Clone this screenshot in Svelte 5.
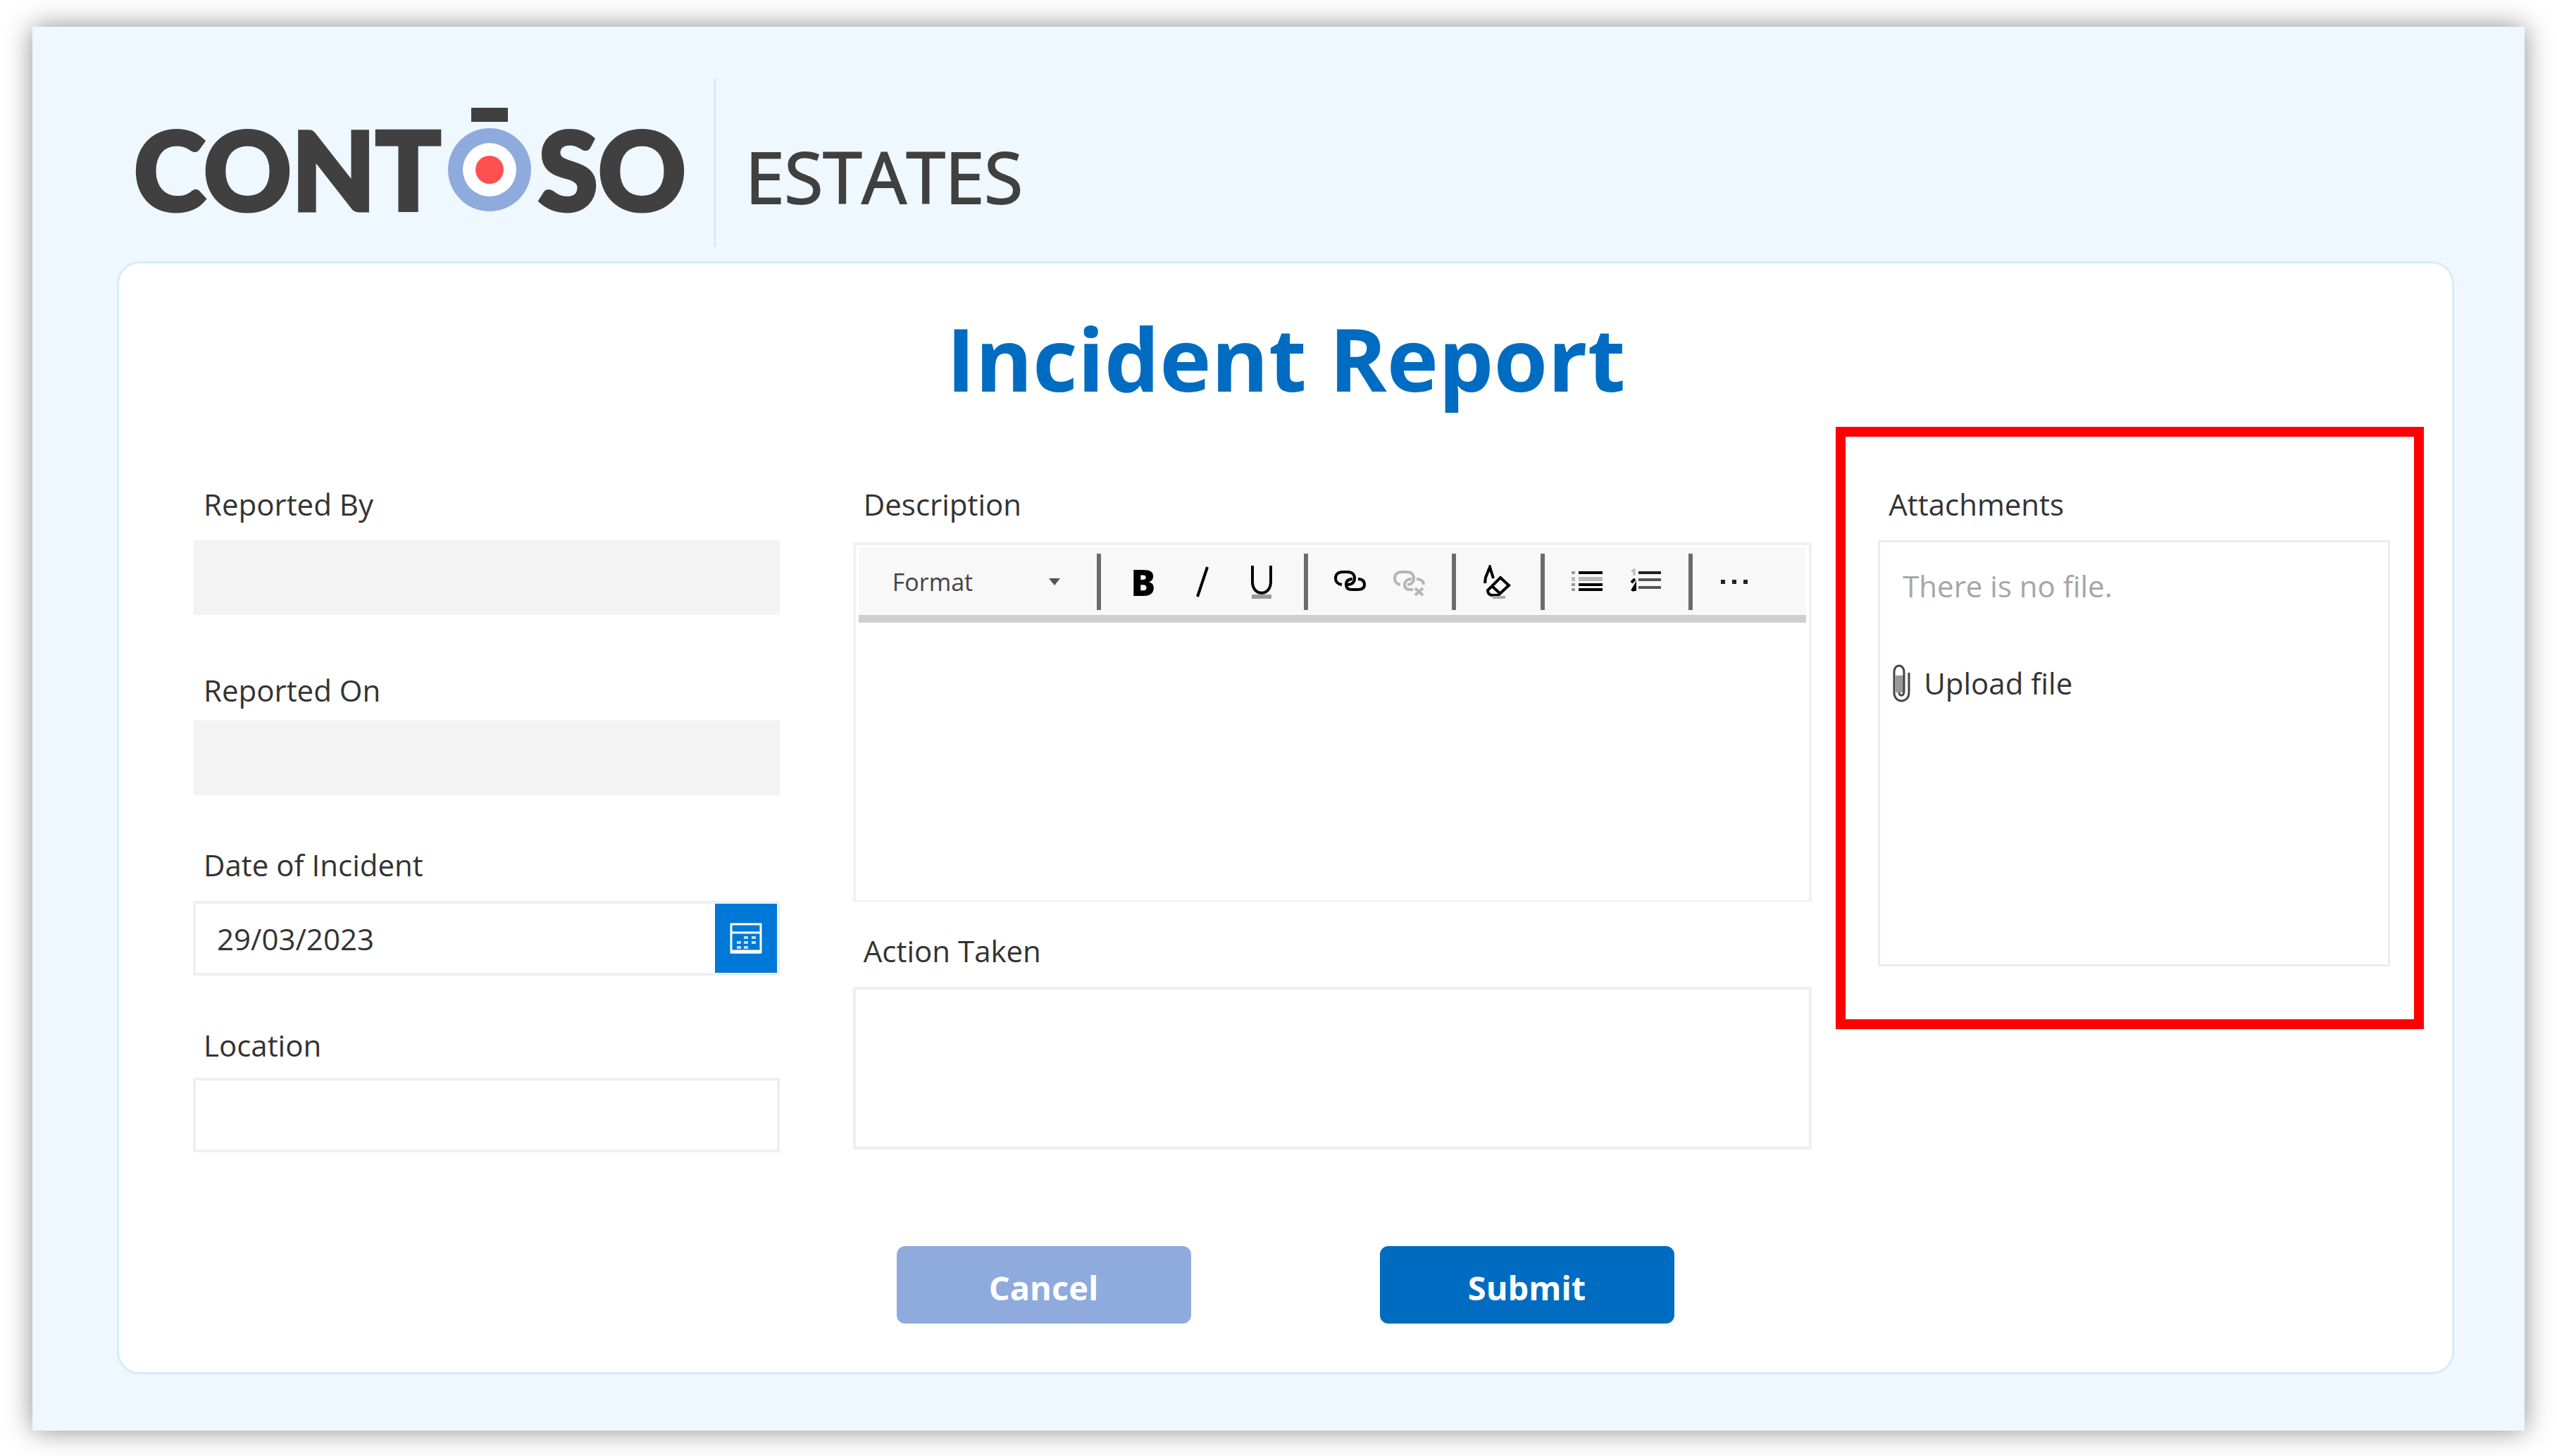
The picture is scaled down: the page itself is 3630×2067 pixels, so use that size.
<script lang="ts">
  let date = $state('29/03/2023');
</script>

<main class="screen">
  <header class="brand">
    <div class="logo">
      <span>CONT</span>
      <svg class="target" viewBox="0 0 118 148" aria-hidden="true">
        <rect x="33" y="0" width="52" height="20" fill="#404040" />
        <circle cx="59" cy="88" r="59" fill="#8faadc" />
        <circle cx="59" cy="88" r="38" fill="#fff" />
        <circle cx="59" cy="88" r="20" fill="#ff5050" />
      </svg>
      <span>SO</span>
    </div>
    <div class="unit">ESTATES</div>
  </header>

  <form class="card" onsubmit={(e) => e.preventDefault()}>
    <h1>Incident Report</h1>

    <div class="columns">
      <div class="column details">
        <div class="field">
          <label for="by">Reported By</label>
          <input id="by" class="box readonly" readonly />
        </div>
        <div class="field">
          <label for="on" class="low">Reported On</label>
          <input id="on" class="box readonly" readonly />
        </div>
        <div class="field">
          <label for="date">Date of Incident</label>
          <div class="box date">
            <input id="date" bind:value={date} />
            <button type="button" aria-label="Open calendar">
              <svg viewBox="0 0 46 44" fill="none" stroke="#fff" stroke-width="3">
                <path d="M2 2H44V42H2ZM2 14H44" />
                <path d="M2 41H44" stroke-width="5" />
                <path d="M20 21h6M31 21h6M10 28h6M20 28h6M31 28h6M10 35h6M20 35h6" stroke="#b9dcf7" stroke-width="4" />
              </svg>
            </button>
          </div>
        </div>
        <div class="field">
          <label for="location" class="near">Location</label>
          <input id="location" class="box" />
        </div>
      </div>

      <div class="column notes">
        <div class="field">
          <label for="description">Description</label>
          <div class="editor">
            <div class="toolbar">
              <button type="button" class="format">
                Format
                <svg viewBox="0 0 16 10"><path d="M0 0H16L8 10Z" fill="#555" /></svg>
              </button>
              <div class="group">
                <button type="button" class="bold" aria-label="Bold">B</button>
                <button type="button" aria-label="Italic">
                  <svg viewBox="0 0 48 48"><path d="M31 3L17 45" /></svg>
                </button>
                <button type="button" aria-label="Underline">
                  <svg viewBox="0 0 48 48"><path d="M11 1V24C11 45 37 45 37 24V1" /><path d="M10 45H38" stroke="#999" stroke-width="6" /></svg>
                </button>
              </div>
              <div class="group">
                <button type="button" aria-label="Link">
                  <svg viewBox="0 0 48 48"><path d="M12 28C5 27 3 23 3 19C3 13 7 10 13 10H20C26 10 30 13 30 19C30 25 26 28 20 28" /><path d="M27 20C20 20 18 24 18 28C18 33 21 35 26 35H34C40 35 44 33 44 28C44 23 41 20 35 20" /></svg>
                </button>
                <button type="button" class="off" aria-label="Remove link">
                  <svg viewBox="0 0 48 48"><path d="M11 28C5 27 3 23 3 19C3 13 7 10 13 10H20C26 10 30 13 30 19C30 25 26 28 21 28" /><path d="M27 20C20 20 17 24 17 28C17 33 20 35 25 35H29M34 20C40 20 44 23 44 28M32 33L43 43M43 33L32 43" /></svg>
                </button>
              </div>
              <div class="group">
                <button type="button" aria-label="Clear formatting">
                  <svg viewBox="0 0 48 48"><path d="M5 26L6 18L12 3L17 19M27 18L39 29L24 43H15Q9 42 9 36ZM15 30L27 41" /><path d="M16 46H34" stroke="#aaa" /></svg>
                </button>
              </div>
              <div class="group">
                <button type="button" aria-label="Bulleted list">
                  <svg viewBox="0 0 48 48"><path d="M12 11H46M12 28H46M12 35H46" /><path d="M12 20H46M2 20H7" stroke="#bbb" stroke-width="6" /><path d="M2 11H7M2 28H7M2 35H7" stroke="#999" /></svg>
                </button>
                <button type="button" aria-label="Numbered list">
                  <svg viewBox="0 0 48 48"><path d="M13 11H45" stroke="#222" /><path d="M13 21H45M13 32H45" stroke="#555" /><path d="M3 9L7 7V15" stroke="#bbb" stroke-width="3" /><path d="M3 25L8 20M4 37L8 30V37" /></svg>
                </button>
              </div>
              <div class="group">
                <button type="button" aria-label="More">
                  <svg viewBox="0 0 48 48"><path d="M4 24h6M20 24h6M36 24h6" stroke="#222" stroke-width="6" /></svg>
                </button>
              </div>
            </div>
            <textarea id="description"></textarea>
          </div>
        </div>
        <div class="field">
          <label for="action">Action Taken</label>
          <textarea id="action" class="box action"></textarea>
        </div>
      </div>

      <section class="attachments">
        <h2>Attachments</h2>
        <div class="files">
          <p>There is no file.</p>
          <button type="button">
            <svg viewBox="0 0 26 54" fill="none" stroke="#444" stroke-width="3"><path d="M4 16H16V40H4Z" fill="#999" stroke="none" /><path d="M23 12V40C23 56 2 56 2 40V11C2 -1 16 -1 16 11V38C16 46 9 46 9 40" /></svg>
            Upload file
          </button>
        </div>
      </section>
    </div>

    <div class="actions">
      <button type="button" class="cancel">Cancel</button>
      <button type="submit">Submit</button>
    </div>
  </form>
</main>

<style>
  :global(body) {
    background: #fff;
  }

  .screen,
  .screen * {
    box-sizing: border-box;
    font-family: 'Open Sans', 'Noto Sans', sans-serif;
  }

  .screen {
    margin: 38px 46px;
    padding: 73px 100px 80px 120px;
    background: #eff7ff;
    box-shadow: 0 0 36px rgb(0 0 0 / 45%);
    color: #333;
  }

  .brand {
    display: flex;
    height: 240px;
    margin-bottom: 20px;
    color: #404040;
  }

  .logo {
    display: flex;
    align-items: flex-end;
    gap: 10px;
    width: 850px;
    padding: 0 0 50px 24px;
    border-right: 2px solid #d3e3f5;
  }

  .logo span {
    padding-bottom: 6px;
    font: 900 154px/110px Lato, sans-serif;
    -webkit-text-stroke: 5px #404040;
  }

  .target {
    width: 118px;
    height: 148px;
  }

  .unit {
    padding: 72px 0 0 42px;
    font-size: 100px;
    line-height: 134px;
    -webkit-text-stroke: 2px #404040;
  }

  .card {
    padding: 50px 40px 69px 105px;
    border: 3px solid #d9ebfa;
    border-radius: 32px;
    background: #fff;
  }

  h1 {
    margin: 0;
    padding-right: 64px;
    color: #006cc1;
    font-size: 124px;
    font-weight: 700;
    line-height: 168px;
    text-align: center;
  }

  .columns {
    display: grid;
    grid-template-columns: 832fr 104px 1360fr 34px 834fr;
    align-items: start;
    margin-top: 14px;
  }

  .details {
    grid-column: 1;
    row-gap: 69px;
  }

  .notes {
    grid-column: 3;
    row-gap: 40px;
  }

  .attachments {
    grid-column: 5;
  }

  .column {
    display: grid;
    align-content: start;
    padding-top: 80px;
  }

  .field {
    display: grid;
  }

  label,
  h2 {
    height: 81px;
    margin: 0;
    padding-left: 15px;
    font-size: 42px;
    font-weight: 400;
    line-height: 60px;
  }

  .low {
    line-height: 76px;
  }

  .near {
    height: 76px;
  }

  .box {
    width: 100%;
    height: 106px;
    padding: 0 30px;
    border: 4px solid #efefef;
    background: #fff;
    color: #333;
    font-size: 42px;
    outline: none;
    resize: none;
  }

  .readonly {
    border-color: #f3f3f3;
    background: #f3f3f3;
  }

  .date {
    display: flex;
    padding: 0;
  }

  .date input {
    flex: 1;
    min-width: 0;
    padding: 0 30px;
    border: 0;
    background: none;
    color: inherit;
    font-size: 42px;
    outline: none;
  }

  .date button {
    display: grid;
    place-items: center;
    width: 88px;
    border: 0;
    background: #0078d7;
  }

  .date svg {
    width: 46px;
    height: 44px;
  }

  .editor {
    margin-top: 3px;
    padding: 4px 4px 0;
    border: 4px solid #f1f1f1;
    border-bottom-width: 2px;
  }

  .editor textarea {
    display: block;
    width: 100%;
    height: 394px;
    padding: 20px;
    border: 0;
    background: #fff;
    font-size: 42px;
    outline: none;
    resize: none;
  }

  .toolbar {
    display: flex;
    align-items: center;
    height: 106px;
    border-bottom: 11px solid #cfcfcf;
    background: #f8f8f8;
  }

  .toolbar button {
    display: flex;
    justify-content: center;
    align-items: center;
    width: 84px;
    height: 80px;
    padding: 0;
    border: 0;
    background: none;
    color: #000;
  }

  .toolbar .format {
    justify-content: space-between;
    width: 338px;
    padding: 0 52px 0 48px;
    color: #444;
    font-size: 34px;
  }

  .format svg {
    width: 16px;
    height: 10px;
  }

  .toolbar .bold {
    font-size: 52px;
    font-weight: 800;
  }

  .group {
    display: flex;
    padding: 0 18px;
    border-left: 6px solid #6b6b6b;
  }

  .group svg {
    width: 48px;
    height: 48px;
    fill: none;
    stroke: #000;
    stroke-width: 4;
  }

  .group .off svg {
    stroke: #b5b5b5;
  }

  .box.action {
    height: 231px;
  }

  .attachments {
    padding: 66px 34px 75px 46px;
    border: 14px solid #f00;
  }

  .files {
    display: grid;
    align-content: start;
    justify-items: start;
    height: 605px;
    padding: 32px 18px;
    border: 3px solid #ececec;
    font-size: 42px;
    line-height: 60px;
  }

  .files p {
    margin: 0 0 78px;
    padding-left: 14px;
    color: #a6a6a6;
  }

  .files button {
    display: flex;
    align-items: center;
    gap: 18px;
    padding: 0;
    border: 0;
    background: none;
    color: #333;
    font-size: 42px;
    line-height: 60px;
  }

  .files svg {
    width: 26px;
    height: 54px;
  }

  .actions {
    display: flex;
    justify-content: center;
    gap: 268px;
    margin-top: 133px;
    padding-right: 66px;
  }

  .actions button {
    width: 418px;
    height: 110px;
    padding: 8px 0 0;
    border: 0;
    border-radius: 12px;
    background: #006cc1;
    color: #fff;
    font-size: 47px;
    font-weight: 700;
  }

  .actions .cancel {
    background: #8faadc;
  }
</style>
